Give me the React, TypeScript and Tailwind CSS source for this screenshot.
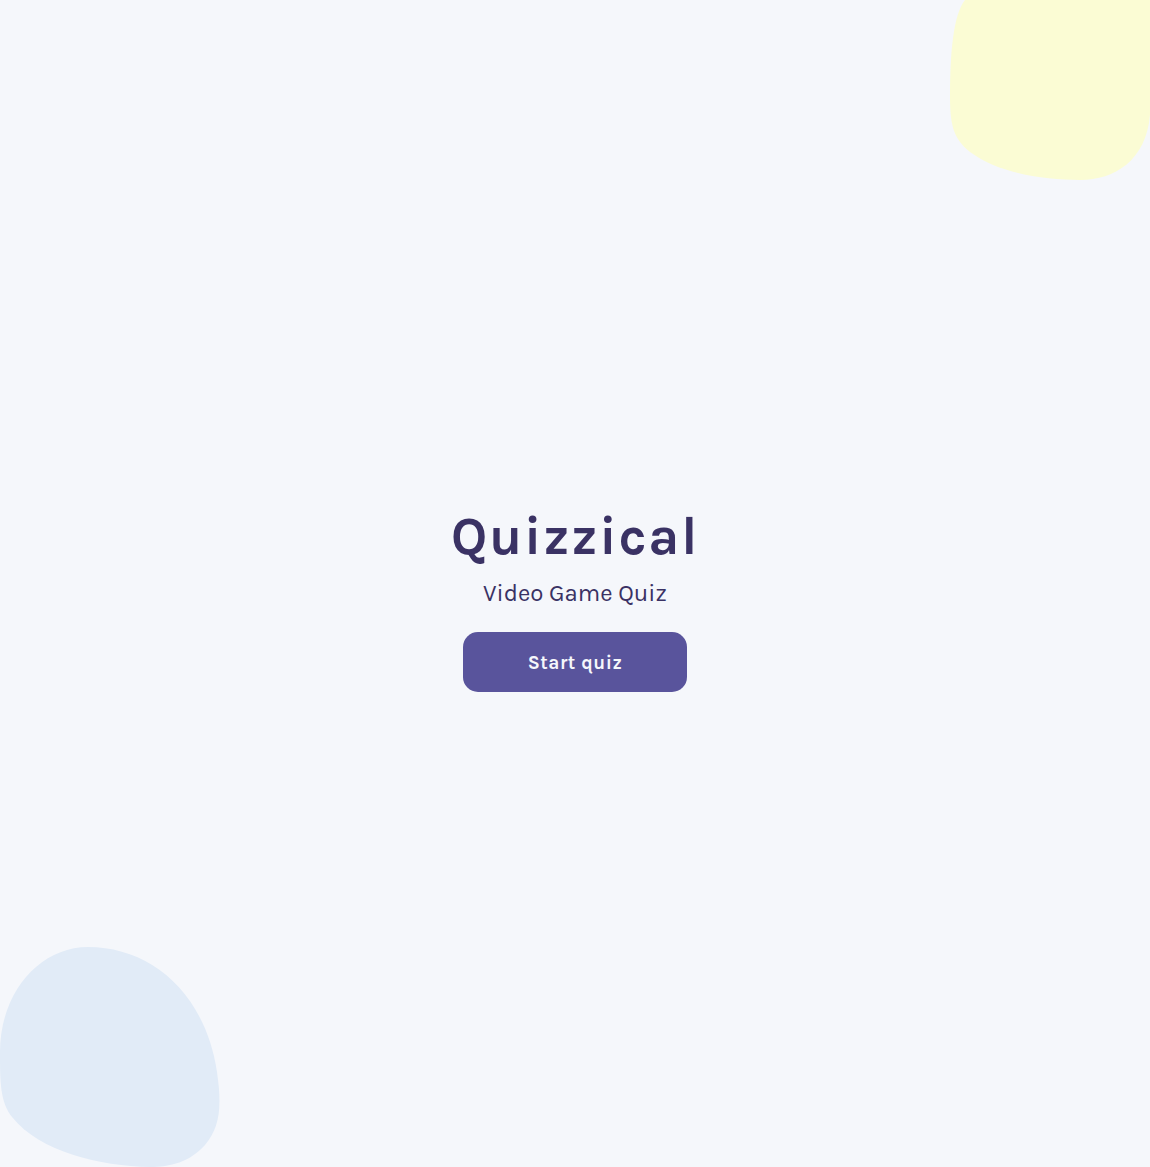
const font = { fontFamily: 'Karla, Inter, "Noto Sans", sans-serif' };

const YellowBlob = () => (
    <svg
        className="absolute top-0 right-0"
        width="200"
        height="180"
        viewBox="0 0 200 180"
    >
        <path
            d="M15 0 L200 0 L200 115 C196 160 165 180 130 180 C95 180 50 174 20 152 C2 138 0 122 0 95 C0 55 3 15 15 0 Z"
            fill="#fbfcd4"
        />
    </svg>
);

const BlueBlob = () => (
    <svg
        className="absolute bottom-0 left-0"
        width="220"
        height="220"
        viewBox="0 0 220 220"
    >
        <path
            d="M88 0 C150 0 205 45 217 125 C222 160 220 180 205 198 C190 215 170 220 150 220 C100 219 40 205 12 170 C0 155 0 135 0 105 C0 45 40 0 88 0 Z"
            fill="#e1ebf7"
        />
    </svg>
);

export default function App() {
    return (
        <main
            className="relative min-h-screen overflow-hidden bg-[#f5f7fb] flex flex-col items-center justify-center"
            style={font}
        >
            <YellowBlob />
            <BlueBlob />
            <div className="relative flex flex-col items-center pt-[35px]">
                <h1 className="text-[53px] leading-none font-bold tracking-[1.8px] text-[#3a3264]">
                    Quizzical
                </h1>
                <p className="mt-[18px] text-[24px] leading-none text-[#3a3264]">
                    Video Game Quiz
                </p>
                <button className="mt-[27px] w-[224px] h-[60px] rounded-[15px] bg-[#59549c] text-[#f5f7fb] text-[19px] font-bold tracking-[0.5px] pt-[2px]">
                    Start quiz
                </button>
            </div>
        </main>
    );
}
